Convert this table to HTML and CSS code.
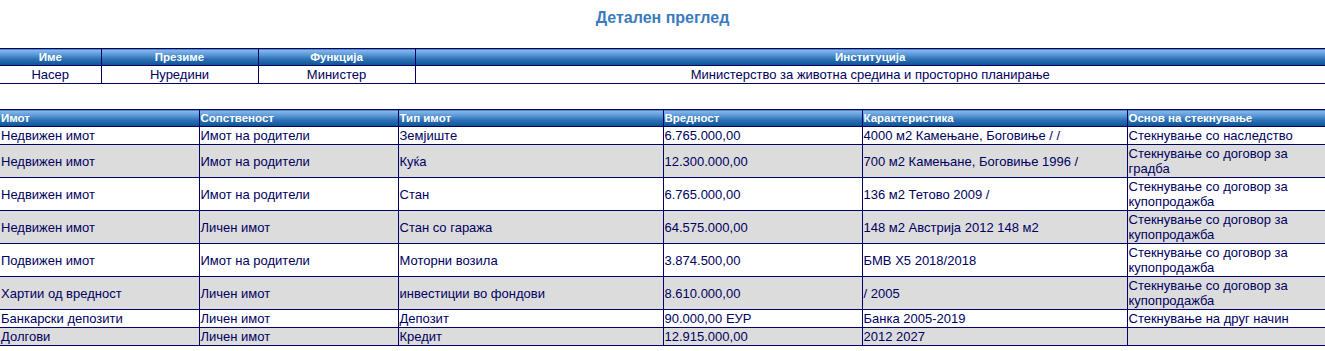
FILE: index.html
```html
<!DOCTYPE html>
<html lang="mk">
<head>
<meta charset="utf-8">
<title>Детален преглед</title>
<link rel="stylesheet" href="styles.css">
</head>
<body>
<h1 class="title">Детален преглед</h1>

<table class="grid person">
  <colgroup>
    <col class="c-name"><col class="c-surname"><col class="c-func"><col>
  </colgroup>
  <thead>
    <tr><th>Име</th><th>Презиме</th><th>Функција</th><th>Институција</th></tr>
  </thead>
  <tbody>
    <tr><td>Насер</td><td>Нуредини</td><td>Министер</td><td>Министерство за животна средина и просторно планирање</td></tr>
  </tbody>
</table>

<table class="grid assets">
  <colgroup>
    <col class="narrow"><col class="narrow"><col class="wide"><col class="narrow"><col class="wide"><col>
  </colgroup>
  <thead>
    <tr><th>Имот</th><th>Сопственост</th><th>Тип имот</th><th>Вредност</th><th>Карактеристика</th><th>Основ на стекнување</th></tr>
  </thead>
  <tbody>
    <tr><td>Недвижен имот</td><td>Имот на родители</td><td>Земјиште</td><td>6.765.000,00</td><td>4000 м2 Камењане, Боговиње / /</td><td>Стекнување со наследство</td></tr>
    <tr class="alt"><td>Недвижен имот</td><td>Имот на родители</td><td>Куќа</td><td>12.300.000,00</td><td>700 м2 Камењане, Боговиње 1996 /</td><td>Стекнување со договор за градба</td></tr>
    <tr><td>Недвижен имот</td><td>Имот на родители</td><td>Стан</td><td>6.765.000,00</td><td>136 м2 Тетово 2009 /</td><td>Стекнување со договор за купопродажба</td></tr>
    <tr class="alt"><td>Недвижен имот</td><td>Личен имот</td><td>Стан со гаража</td><td>64.575.000,00</td><td>148 м2 Австрија 2012 148 м2</td><td>Стекнување со договор за купопродажба</td></tr>
    <tr><td>Подвижен имот</td><td>Имот на родители</td><td>Моторни возила</td><td>3.874.500,00</td><td>БМВ Х5 2018/2018</td><td>Стекнување со договор за купопродажба</td></tr>
    <tr class="alt"><td>Хартии од вредност</td><td>Личен имот</td><td>инвестиции во фондови</td><td>8.610.000,00</td><td>/ 2005</td><td>Стекнување со договор за купопродажба</td></tr>
    <tr><td>Банкарски депозити</td><td>Личен имот</td><td>Депозит</td><td>90.000,00 ЕУР</td><td>Банка 2005-2019</td><td>Стекнување на друг начин</td></tr>
    <tr class="alt"><td>Долгови</td><td>Личен имот</td><td>Кредит</td><td>12.915.000,00</td><td>2012 2027</td><td></td></tr>
  </tbody>
</table>
</body>
</html>
```

FILE: styles.css
```css
html, body {
  margin: 0;
  padding: 0;
  background: #ffffff;
}

body {
  font-family: "Liberation Sans", Arial, sans-serif;
  color: #000060;
}

.title {
  margin: 0 0 20px 0;
  padding-top: 8px;
  text-align: center;
  font-size: 16px;
  line-height: 20px;
  font-weight: bold;
  color: #3b7bbd;
}

.grid {
  width: 100%;
  border-collapse: collapse;
  table-layout: fixed;
  border: none;
}

.grid th,
.grid td {
  border: 1px solid #000066;
  overflow: hidden;
}

.grid th:first-child,
.grid td:first-child {
  border-left: none;
}

.grid th:last-child,
.grid td:last-child {
  border-right: none;
}

.grid th {
  height: 16px;
  padding: 0 1px;
  font-size: 11.5px;
  line-height: 16px;
  font-weight: bold;
  color: #ffffff;
  background: linear-gradient(to bottom, #8cbdee 0%, #5594d4 35%, #2a6fb2 62%, #0c5394 100%);
  white-space: nowrap;
}

.grid td {
  padding: 1px 1px;
  font-size: 13px;
  line-height: 15px;
  vertical-align: middle;
}

.person {
  margin-bottom: 25px;
}

.person th,
.person td {
  text-align: center;
}

.person .c-name { width: 101px; }
.person .c-surname { width: 157px; }
.person .c-func { width: 157px; }

.assets th,
.assets td {
  text-align: left;
}

.assets .narrow { width: 199px; }
.assets .wide { width: 265px; }

.assets tr.alt td {
  background: #dcdcdc;
}
```
